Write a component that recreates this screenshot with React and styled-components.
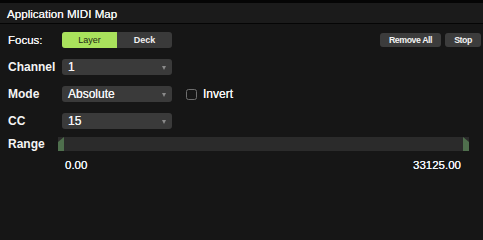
import React from "react";
import styled, { createGlobalStyle } from "styled-components";

const Global = createGlobalStyle`
  html, body { margin: 0; padding: 0; background: #161616; }
  body { font-family: "Liberation Sans", Arial, sans-serif; color: #fff; -webkit-font-smoothing: antialiased; }
`;

const Window = styled.div`
  width: 483px;
  height: 239px;
  background: #161616;
  border-top: 3px solid #050505;
  box-sizing: border-box;
  display: flex;
  flex-direction: column;
`;

const TitleBar = styled.div`
  height: 20px;
  background: #1b1b1b;
  border-bottom: 1px solid #050505;
  display: flex;
  align-items: center;
  padding-left: 7px;
  font-size: 11.6px;
  color: #f2f2f2;
  text-shadow: 0 0 0.4px #fff;
`;

const Body = styled.div`
  display: flex;
  flex-direction: column;
  padding: 8px 2px 0 8px;
`;

const Row = styled.div`
  display: flex;
  align-items: center;
  height: ${(p) => p.$h || 16}px;
  margin-bottom: ${(p) => p.$gap ?? 11}px;
`;

const Label = styled.div`
  width: 54px;
  flex: none;
  font-size: ${(p) => (p.$bold ? 12 : 11.5)}px;
  font-weight: ${(p) => (p.$bold ? 700 : 400)};
  color: #f4f4f4;
  text-shadow: ${(p) => (p.$bold ? "none" : "0 0 0.4px #fff")};
`;

const Segmented = styled.div`
  display: flex;
  width: 110px;
  height: 16px;
  border-radius: 3px;
  overflow: hidden;
  background: #3a3a3a;
`;

const Segment = styled.div`
  flex: 1;
  display: flex;
  align-items: center;
  justify-content: center;
  font-size: 9px;
  font-weight: ${(p) => (p.$active ? 400 : 700)};
  background: ${(p) => (p.$active ? "#a9e25c" : "transparent")};
  color: ${(p) => (p.$active ? "#1e2a14" : "#f0f0f0")};
`;

const Spacer = styled.div`
  flex: 1;
`;

const Button = styled.div`
  height: 14px;
  width: ${(p) => p.$w}px;
  margin-left: ${(p) => p.$ml || 0}px;
  border-radius: 3px;
  background: #3c3c3c;
  display: flex;
  align-items: center;
  justify-content: center;
  font-size: 8.8px;
  font-weight: 700;
  letter-spacing: -0.45px;
  color: #f2f2f2;
`;

const Select = styled.div`
  position: relative;
  width: 110px;
  height: 16px;
  border-radius: 3px;
  background: #3a3a3a;
  display: flex;
  align-items: center;
  padding-left: 6px;
  box-sizing: border-box;
  font-size: 12px;
  color: #f4f4f4;
  text-shadow: 0 0 0.4px #fff;
`;

const Arrow = styled.span`
  position: absolute;
  right: 6px;
  top: 7px;
  width: 0;
  height: 0;
  border-left: 2.5px solid transparent;
  border-right: 2.5px solid transparent;
  border-top: 4px solid #8a8a8a;
`;

const CheckWrap = styled.div`
  display: flex;
  align-items: center;
  margin-left: 14px;
  gap: 6px;
  font-size: 12px;
  color: #f4f4f4;
  text-shadow: 0 0 0.4px #fff;
`;

const Box = styled.div`
  width: 9px;
  height: 9px;
  border: 1.5px solid #6e6e6e;
  border-radius: 2.5px;
`;

const RangeBar = styled.div`
  width: 411px;
  height: 14px;
  margin-left: -4px;
  background: #2b2b2b;
  display: flex;
  justify-content: space-between;
`;

const Handle = styled.div`
  width: 6px;
  height: 14px;
  background: #4f6f4d;
  clip-path: ${(p) =>
    p.$side === "left"
      ? "polygon(0 5px, 6px 0, 6px 100%, 0 100%)"
      : "polygon(0 0, 0 100%, 6px 100%, 6px 5px)"};
`;

const Values = styled.div`
  display: flex;
  justify-content: space-between;
  width: 396px;
  margin-left: 57px;
  font-size: 11.5px;
  color: #f4f8ff;
  text-shadow: 0 0 0.4px #fff;
`;

export default function App() {
  return (
    <>
      <Global />
      <Window>
        <TitleBar>Application MIDI Map</TitleBar>
        <Body>
          <Row>
            <Label>Focus:</Label>
            <Segmented>
              <Segment $active>Layer</Segment>
              <Segment>Deck</Segment>
            </Segmented>
            <Spacer />
            <Button $w={61}>Remove All</Button>
            <Button $w={36} $ml={4}>Stop</Button>
          </Row>
          <Row>
            <Label $bold>Channel</Label>
            <Select>
              1<Arrow />
            </Select>
          </Row>
          <Row>
            <Label $bold>Mode</Label>
            <Select>
              Absolute<Arrow />
            </Select>
            <CheckWrap>
              <Box />
              Invert
            </CheckWrap>
          </Row>
          <Row $gap={8}>
            <Label $bold>CC</Label>
            <Select>
              15<Arrow />
            </Select>
          </Row>
          <Row $h={14} $gap={8}>
            <Label $bold>Range</Label>
            <RangeBar>
              <Handle $side="left" />
              <Handle $side="right" />
            </RangeBar>
          </Row>
          <Values>
            <span>0.00</span>
            <span>33125.00</span>
          </Values>
        </Body>
      </Window>
    </>
  );
}
